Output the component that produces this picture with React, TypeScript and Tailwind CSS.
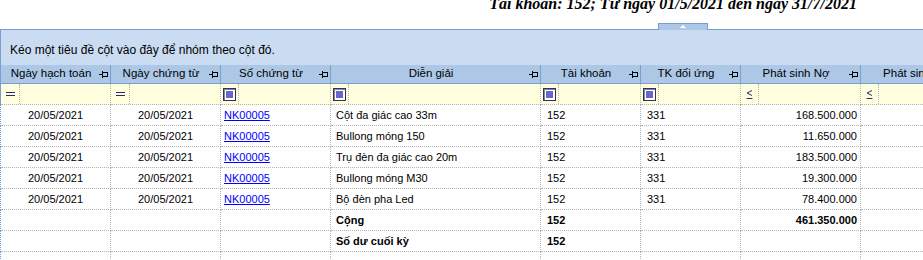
import React from 'react';

const cols = [
  { title: 'Ngày hạch toán', w: 'w-[110px]', op: 'eq' },
  { title: 'Ngày chứng từ', w: 'w-[110px]', op: 'eq' },
  { title: 'Số chứng từ', w: 'w-[110px]', op: 'box' },
  { title: 'Diễn giải', w: 'w-[210px]', op: 'box' },
  { title: 'Tài khoản', w: 'w-[100px]', op: 'box' },
  { title: 'TK đối ứng', w: 'w-[100px]', op: 'box' },
  { title: 'Phát sinh Nợ', w: 'w-[120px]', op: 'le' },
  { title: 'Phát sinh Có', w: 'w-[120px]', op: 'le' },
];

const rows = [
  ['Cột đa giác cao 33m', '168.500.000'],
  ['Bullong móng 150', '11.650.000'],
  ['Trụ đèn đa giác cao 20m', '183.500.000'],
  ['Bullong móng M30', '19.300.000'],
  ['Bộ đèn pha Led', '78.400.000'],
];

const Pin = () => (
  <svg width="10" height="7" viewBox="0 0 10 7" className="shrink-0">
    <path d="M0 3.5H3M3.5 0V7M3.5 1.5H8.5V5.5H3.5M8.5 1.5V5.5" stroke="#000" strokeWidth="1" fill="none" shapeRendering="crispEdges" />
  </svg>
);

const OpIcon = ({ op }: { op: string }) => {
  if (op === 'eq')
    return (
      <svg width="9" height="5" viewBox="0 0 9 5">
        <path d="M0 0.5H9M0 3.5H9" stroke="#2b2b6b" strokeWidth="1" shapeRendering="crispEdges" />
      </svg>
    );
  if (op === 'box')
    return (
      <svg width="13" height="13" viewBox="0 0 13 13">
        <rect x="0.5" y="0.5" width="12" height="12" fill="#fff" stroke="#33335a" strokeWidth="1" shapeRendering="crispEdges" />
        <rect x="1" y="1" width="11" height="11" fill="none" stroke="#33335a" strokeWidth="0.6" shapeRendering="crispEdges" />
        <rect x="3" y="3" width="7" height="7" fill="#6666cc" />
      </svg>
    );
  return (
    <svg width="7" height="9" viewBox="0 0 7 9">
      <path d="M6 0.5L1 3L6 5.5M0.5 8.5H6.5" stroke="#2b2b6b" strokeWidth="1" fill="none" />
    </svg>
  );
};

const Cell = ({ w, children, cls = '' }: { w: string; children?: React.ReactNode; cls?: string }) => (
  <div className={`${w} shrink-0 h-[21px] flex items-center border-r border-b border-dotted border-[#b4b4b4] whitespace-nowrap ${cls}`}>{children}</div>
);

export default function App() {
  return (
    <div className="w-[923px] h-[260px] overflow-hidden bg-white text-[11px] text-black" style={{ fontFamily: '"Liberation Sans", Arial, sans-serif' }}>
      <div className="h-[23px] flex justify-end pr-[66px]">
        <div className="mt-[-5px] text-[16px] font-bold italic leading-[18px]" style={{ fontFamily: '"Liberation Serif", "Times New Roman", serif' }}>
          Tài khoản: 152; Từ ngày 01/5/2021 đến ngày 31/7/2021
        </div>
      </div>
      <div className="h-[6px] flex">
        <div className="ml-[658px] w-[50px] h-[7px] bg-[#adc8e7] border border-b-0 border-[#7b9ed0] flex justify-center pt-[1px]">
          <svg width="6" height="3" viewBox="0 0 6 3"><path d="M0 3L3 0L6 3Z" fill="#fff" /></svg>
        </div>
      </div>
      <div className="h-[36px] bg-[#cadcf1] border-t border-l border-[#7b9ed0] pl-[9px] pt-[13px] leading-[14px] text-[12px]">
        Kéo một tiêu đề cột vào đây để nhóm theo cột đó.
      </div>
      <div className="flex h-[19px] bg-[#adc8e7] border-l border-b border-[#7b9ed0]">
        {cols.map((c, i) => (
          <div key={i} className={`${c.w} shrink-0 flex items-center border-r border-[#7b9ed0] pr-[1px]`}>
            <span className="flex-1 text-center text-[11.5px] whitespace-nowrap overflow-hidden pl-[6px] pr-[4px]">{c.title}</span>
            <Pin />
          </div>
        ))}
      </div>
      <div className="flex bg-[#ffffdf] border-l border-[#7b9ed0]">
        {cols.map((c, i) => (
          <Cell key={i} w={c.w}>
            <div className={`${i < 2 ? 'w-[19px]' : 'w-[18px]'} h-full flex items-center justify-center border-r border-dotted border-[#b4b4b4]`}>
              <OpIcon op={c.op} />
            </div>
          </Cell>
        ))}
      </div>
      {rows.map((r, i) => (
        <div key={i} className="flex border-l border-dotted border-[#7b9ed0]">
          <Cell w="w-[110px]" cls="justify-center">20/05/2021</Cell>
          <Cell w="w-[110px]" cls="justify-center">20/05/2021</Cell>
          <Cell w="w-[110px]" cls="pl-[3px]"><span className="text-[#0000ff] underline">NK00005</span></Cell>
          <Cell w="w-[210px]" cls="pl-[5px]">{r[0]}</Cell>
          <Cell w="w-[100px]" cls="pl-[6px]">152</Cell>
          <Cell w="w-[100px]" cls="pl-[6px]">331</Cell>
          <Cell w="w-[120px]" cls="justify-end pr-[3px]">{r[1]}</Cell>
          <Cell w="w-[120px]" />
        </div>
      ))}
      {[
        ['Cộng', '461.350.000'],
        ['Số dư cuối kỳ', ''],
        ['', ''],
      ].map((r, i) => (
        <div key={i} className="flex border-l border-dotted border-[#7b9ed0] font-bold">
          <Cell w="w-[110px]" />
          <Cell w="w-[110px]" />
          <Cell w="w-[110px]" />
          <Cell w="w-[210px]" cls="pl-[5px]">{r[0]}</Cell>
          <Cell w="w-[100px]" cls="pl-[6px]">{r[0] ? '152' : ''}</Cell>
          <Cell w="w-[100px]" />
          <Cell w="w-[120px]" cls="justify-end pr-[3px]">{r[1]}</Cell>
          <Cell w="w-[120px]" />
        </div>
      ))}
    </div>
  );
}
